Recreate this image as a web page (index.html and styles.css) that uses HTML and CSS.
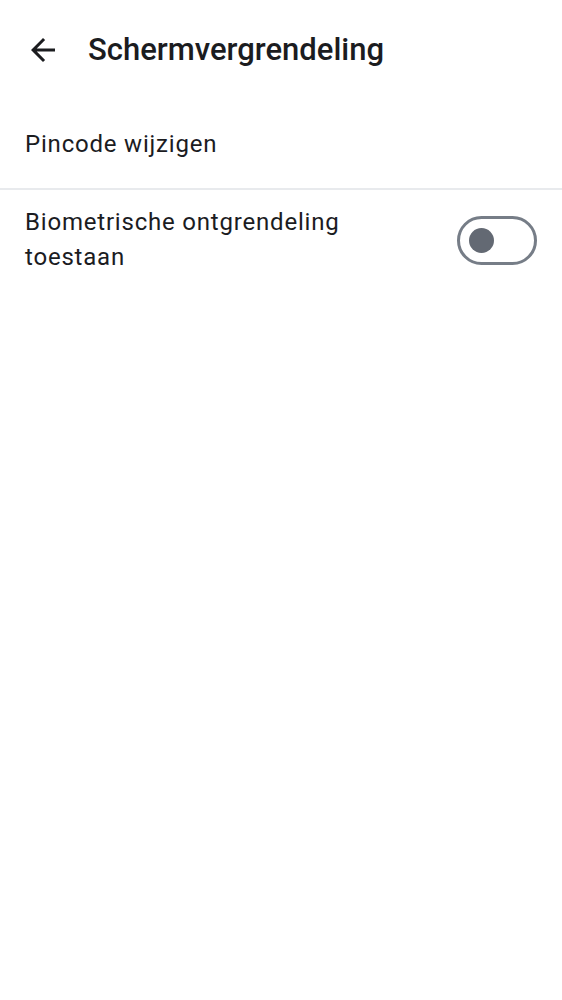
FILE: index.html
```html
<!DOCTYPE html>
<html lang="nl">
<head>
<meta charset="utf-8">
<link rel="stylesheet" href="styles.css">
</head>
<body>
<header class="appbar">
  <button class="back" aria-label="Terug">
    <svg width="36" height="36" viewBox="0 0 24 24"><path d="M20 11H7.83l5.59-5.59L12 4l-8 8 8 8 1.41-1.41L7.83 13H20v-2z" fill="#1b1c1f"/></svg>
  </button>
  <h1 class="title">Schermvergrendeling</h1>
</header>
<main>
  <div class="row">
    <span class="label">Pincode wijzigen</span>
  </div>
  <div class="divider"></div>
  <div class="row row-toggle">
    <span class="label">Biometrische ontgrendeling<br>toestaan</span>
    <span class="switch"><span class="thumb"></span></span>
  </div>
</main>
</body>
</html>
```
FILE: styles.css
```css
html, body {
  margin: 0;
  background: #ffffff;
  font-family: Roboto, "Noto Sans", sans-serif;
  color: #1b1c1f;
}
.appbar {
  height: 100px;
  box-sizing: border-box;
  padding: 0 0 1px 25px;
  display: flex;
  align-items: center;
}
.back {
  width: 36px;
  height: 36px;
  padding: 0;
  border: 0;
  background: none;
  display: flex;
  align-items: center;
  justify-content: center;
}
.back svg { display: block; }
.title {
  margin: 0 0 0 27px;
  font-size: 31px;
  font-weight: 500;
  line-height: 36px;
  color: #1b1c1f;
}
.row {
  height: 88px;
  display: flex;
  align-items: center;
  padding: 0 25px;
  box-sizing: border-box;
}
.label {
  font-size: 24px;
  line-height: 35px;
  letter-spacing: 0.8px;
  flex: 1;
}
.divider {
  height: 2px;
  background: #e8eaed;
}
.row-toggle {
  height: 100px;
  padding-right: 25px;
}
.switch {
  width: 80px;
  height: 49px;
  box-sizing: border-box;
  border: 3px solid #767d87;
  border-radius: 25px;
  display: flex;
  align-items: center;
  padding-left: 9px;
  flex: none;
}
.thumb {
  width: 25px;
  height: 25px;
  border-radius: 50%;
  background: #636973;
}
```
